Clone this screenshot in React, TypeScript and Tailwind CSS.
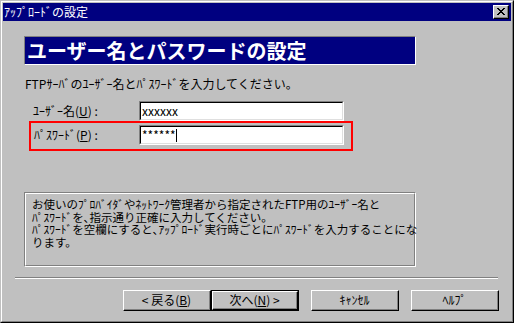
const FONT = '"Noto Sans CJK JP", "Liberation Sans", sans-serif';

const WinButton = ({ label, isDefault }: { label: React.ReactNode; isDefault?: boolean }) => {
  const face = (
    <div className="h-full border-t border-l border-t-white border-l-white border-r border-b border-r-black border-b-black">
      <div className="h-full flex items-center justify-center border-r border-b border-r-[#808080] border-b-[#808080] text-[12px] leading-none text-black">
        {label}
      </div>
    </div>
  );
  if (isDefault) {
    return <div className="w-[88px] h-[21px] border border-black">{face}</div>;
  }
  return <div className="w-[88px] h-[21px]">{face}</div>;
};

const TextBox = ({ children }: { children: React.ReactNode }) => (
  <div className="w-[205px] h-[20px] border-t border-l border-t-[#808080] border-l-[#808080] border-r border-b border-r-white border-b-white">
    <div className="h-full bg-white border-t border-l border-t-black border-l-black border-r border-b border-r-[#dfdfdf] border-b-[#dfdfdf] flex items-center pl-[1px] text-[12px] leading-none text-black">
      {children}
    </div>
  </div>
);

const CloseIcon = () => (
  <svg width="8" height="7" viewBox="0 0 8 7" shapeRendering="crispEdges">
    <path
      d="M0 0h2v1H0zM6 0h2v1H6zM1 1h2v1H1zM5 1h2v1H5zM2 2h4v1H2zM3 3h2v1H3zM2 4h4v1H2zM1 5h2v1H1zM5 5h2v1H5zM0 6h2v1H0zM6 6h2v1H6z"
      fill="#000"
    />
  </svg>
);

export default function App() {
  return (
    <div className="w-[514px] h-[323px] bg-[#c0c0c0] border-t border-l border-t-[#c0c0c0] border-l-[#c0c0c0] border-r border-b border-r-black border-b-black" style={{ fontFamily: FONT }}>
      <div className="h-full border-t border-l border-t-white border-l-white border-r border-b border-r-[#808080] border-b-[#808080] p-[1px]">
        {/* title bar */}
        <div className="h-[18px] bg-[#000080] flex items-center justify-between pl-[1px] pr-[2px]">
          <span className="text-white text-[12px] leading-none">ｱｯﾌﾟﾛｰﾄﾞの設定</span>
          <div className="w-[16px] h-[14px] border-t border-l border-t-white border-l-white border-r border-b border-r-black border-b-black">
            <div className="h-full bg-[#c0c0c0] border-r border-b border-r-[#808080] border-b-[#808080] flex items-center justify-center">
              <CloseIcon />
            </div>
          </div>
        </div>

        {/* banner */}
        <div className="ml-[21px] mt-[15px] w-[392px] h-[29px] border-t border-l border-t-[#808080] border-l-[#808080] border-r border-b border-r-white border-b-white bg-[#000080] flex items-center pl-[2px]">
          <span className="text-white text-[20px] font-bold leading-none">ユーザー名とパスワードの設定</span>
        </div>

        <div className="ml-[22px] mt-[13px] h-[12px] text-[12px] leading-[12px] text-black whitespace-nowrap">
          FTPｻｰﾊﾞのﾕｰｻﾞｰ名とﾊﾟｽﾜｰﾄﾞを入力してください。
        </div>

        {/* user name row */}
        <div className="mt-[11px] flex items-center h-[20px]">
          <div className="ml-[30px] w-[106px] text-[12px] leading-none text-black whitespace-nowrap">
            ﾕｰｻﾞｰ名(<span className="underline">U</span>) :
          </div>
          <TextBox>xxxxxx</TextBox>
        </div>

        {/* password row, highlighted */}
        <div className="ml-[26px] w-[324px] h-[30px] border-2 border-[#ff0000] flex items-start pt-[2px]">
          <div className="ml-[3px] w-[105px] h-[20px] flex items-center text-[12px] leading-none text-black whitespace-nowrap">
            ﾊﾟｽﾜｰﾄﾞ(<span className="underline">P</span>) :
          </div>
          <TextBox>
            <span>******</span>
            <span className="inline-block w-[1px] h-[13px] bg-black" />
          </TextBox>
        </div>

        {/* info box */}
        <div className="ml-[21px] mt-[41px] w-[392px] h-[75px] border-t border-l border-t-[#808080] border-l-[#808080] border-r border-b border-r-white border-b-white">
          <div className="h-full border-t border-l border-t-white border-l-white border-r border-b border-r-[#808080] border-b-[#808080] pl-[6px] pt-[4px] text-[11.5px] leading-[12.5px] text-black whitespace-nowrap">
            <div>お使いのﾌﾟﾛﾊﾞｲﾀﾞやﾈｯﾄﾜｰｸ管理者から指定されたFTP用のﾕｰｻﾞｰ名と</div>
            <div>ﾊﾟｽﾜｰﾄﾞを､指示通り正確に入力してください。</div>
            <div>ﾊﾟｽﾜｰﾄﾞを空欄にすると､ｱｯﾌﾟﾛｰﾄﾞ実行時ごとにﾊﾟｽﾜｰﾄﾞを入力することにな</div>
            <div>ります。</div>
          </div>
        </div>

        {/* separator */}
        <div className="ml-[12px] mt-[10px] w-[483px] h-[2px] border-t border-t-[#808080] border-b border-b-white" />

        {/* buttons */}
        <div className="mt-[11px] flex ml-[120px]">
          <WinButton label={<span>&lt; 戻る(<span className="underline">B</span>)</span>} />
          <WinButton isDefault label={<span>次へ(<span className="underline">N</span>) &gt;</span>} />
          <div className="w-[12px]" />
          <WinButton label="ｷｬﾝｾﾙ" />
          <div className="w-[12px]" />
          <WinButton label="ﾍﾙﾌﾟ" />
        </div>
      </div>
    </div>
  );
}
